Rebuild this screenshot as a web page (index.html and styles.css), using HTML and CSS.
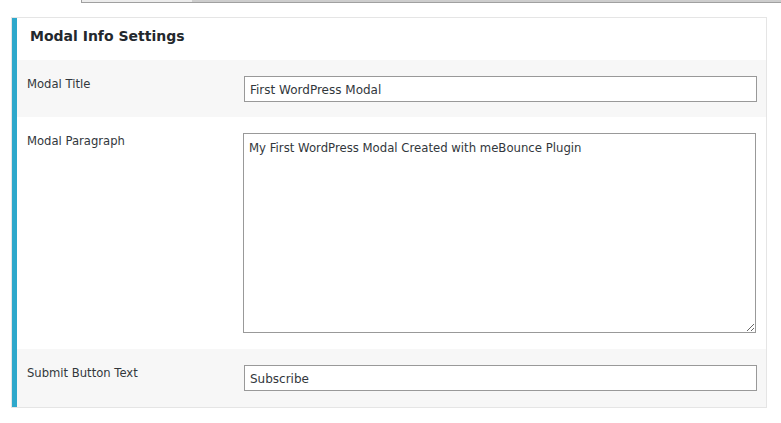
FILE: index.html
```html
<!DOCTYPE html>
<html>
<head>
<meta charset="utf-8">
<link rel="stylesheet" href="styles.css">
</head>
<body>
<div class="topbar"><div class="topbar-fill"></div><div class="topbar-thumb"></div></div>
<div class="panel">
  <div class="panel-inner">
    <div class="panel-head">Modal Info Settings</div>
    <div class="row alt first">
      <div class="label">Modal Title</div>
      <div class="field"><input class="text" type="text" value="First WordPress Modal"></div>
    </div>
    <div class="row">
      <div class="label">Modal Paragraph</div>
      <div class="field"><textarea class="area">My First WordPress Modal Created with meBounce Plugin</textarea></div>
    </div>
    <div class="row alt">
      <div class="label">Submit Button Text</div>
      <div class="field"><input class="text" type="text" value="Subscribe"></div>
    </div>
  </div>
</div>
</body>
</html>
```
FILE: styles.css
```css
html, body {
  margin: 0;
  padding: 0;
  background: #ffffff;
}
body {
  font-family: "DejaVu Sans", Verdana, sans-serif;
  font-size: 12px;
  color: #32373c;
}
.topbar {
  display: flex;
  margin-left: 81px;
  height: 3px;
  box-sizing: border-box;
  border-left: 1px solid #a0a0a0;
  border-bottom: 1px solid #a0a0a0;
}
.topbar-fill {
  width: 110px;
  background: #ececec;
}
.topbar-thumb {
  flex: 1;
  background: #cdcdcd;
}
.panel {
  margin: 14px 0 0 11px;
  width: 756px;
  box-sizing: border-box;
  border: 1px solid #e5e5e5;
  background: #fff;
}
.panel-inner {
  border-left: 5px solid #2ea8cb;
}
.panel-head {
  height: 42px;
  box-sizing: border-box;
  padding: 9px 0 0 13px;
  font-weight: bold;
  font-size: 14px;
  color: #23282d;
  line-height: 18px;
}
.row {
  display: flex;
  padding: 16px 9px 16px 0;
}
.row.first {
  padding-bottom: 15px;
}
.row.alt {
  background: #f7f7f7;
}
.label {
  width: 227px;
  flex: none;
  box-sizing: border-box;
  padding: 0 0 0 10px;
  font-size: 11.6px;
  color: #32373c;
  line-height: 17px;
}
.field {
  flex: 1;
  display: flex;
}
.text {
  width: 513px;
  height: 26px;
  margin: 0;
  box-sizing: border-box;
  border: 1px solid #999;
  border-radius: 0;
  padding: 1px 5px 0;
  font-family: "DejaVu Sans", Verdana, sans-serif;
  font-size: 12px;
  color: #32373c;
  background: #fff;
  outline: none;
}
.area {
  width: 513px;
  height: 200px;
  margin: 0 0 0 -1px;
  box-sizing: border-box;
  border: 1px solid #999;
  border-radius: 0;
  padding: 6px 5px 5px;
  font-family: "DejaVu Sans", Verdana, sans-serif;
  font-size: 11.7px;
  line-height: 16px;
  color: #32373c;
  background: #fff;
  outline: none;
  resize: both;
}
```
